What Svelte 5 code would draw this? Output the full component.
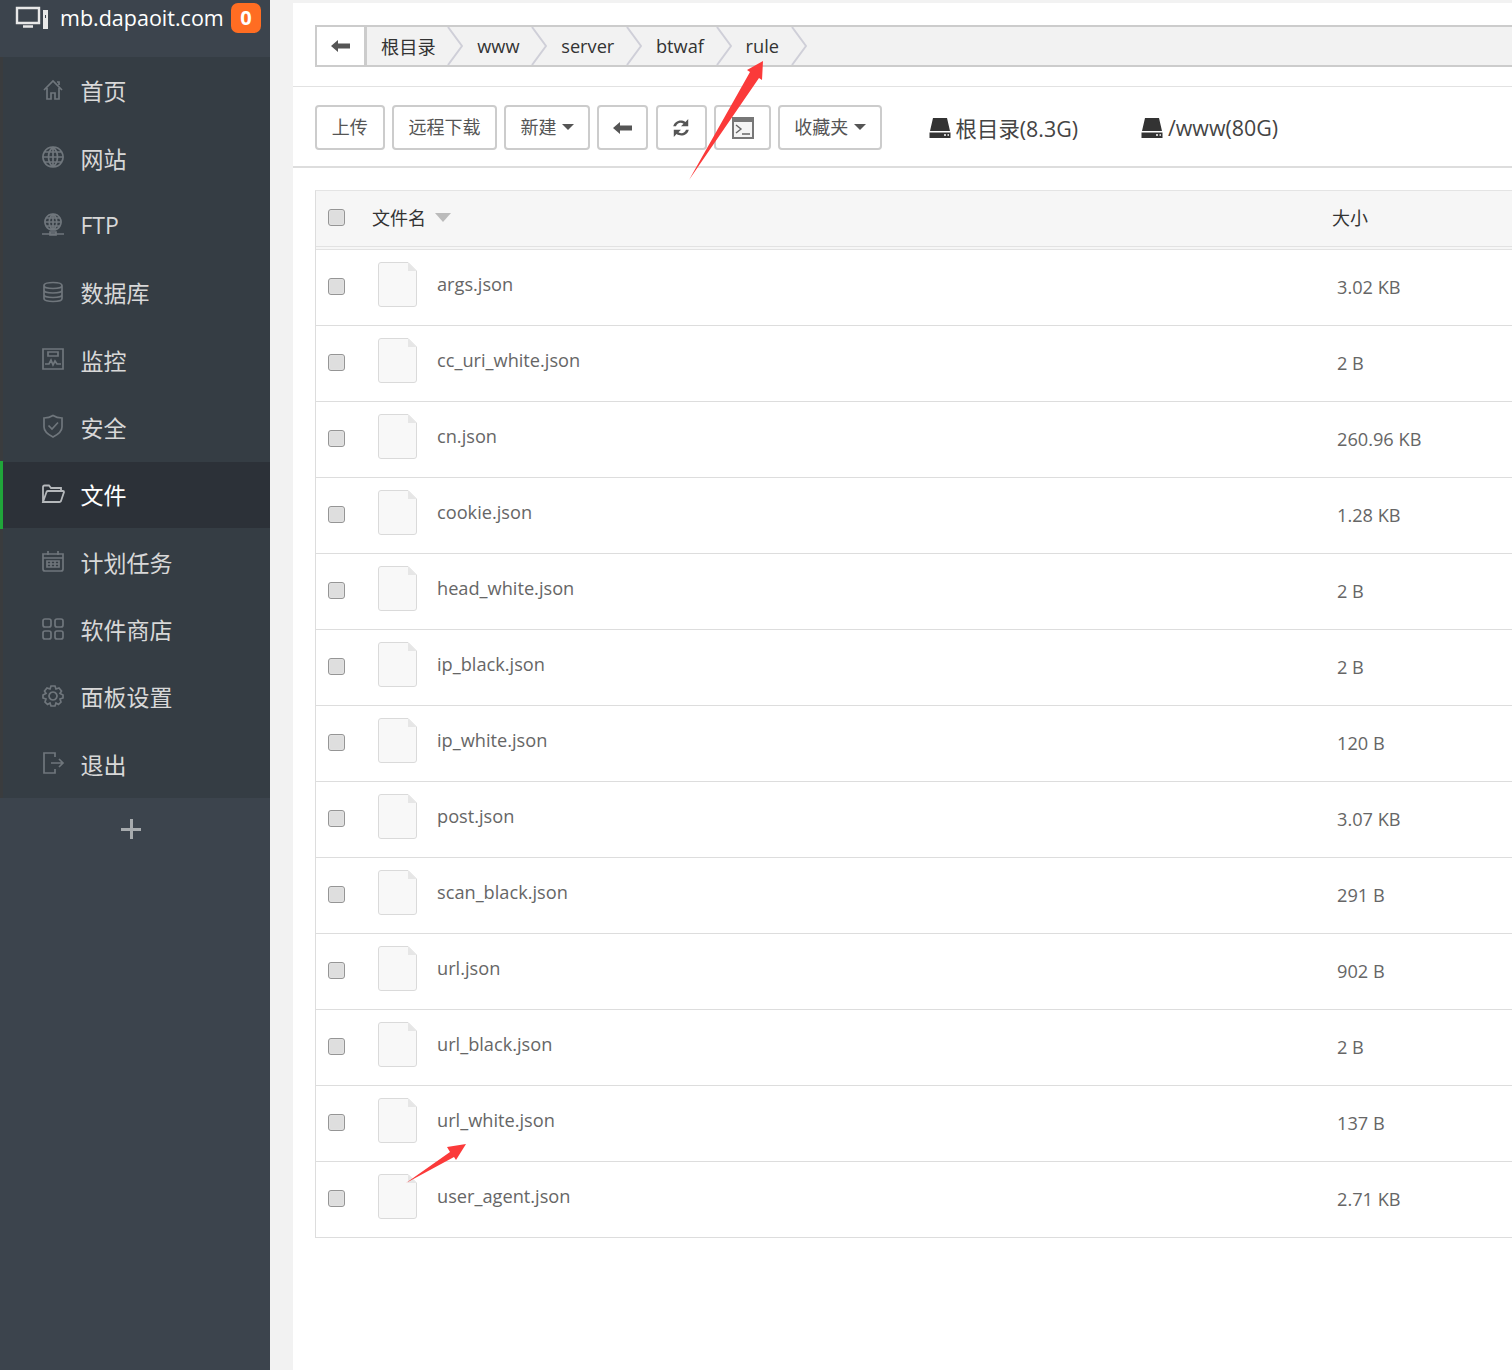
<script>
  const menu = [
    { label: '首页', d: 'M3 12 L12 3 L21 12 M6 10 V21 H10 V15 H14 V21 H18 V10 M16 4 H18 V7' },
    { label: '网站', d: 'M12 2 A10 10 0 1 0 12.01 2 Z M2 12 H22 M3.5 7 H20.5 M3.5 17 H20.5 M12 2 V22 M12 2 C6 7 6 17 12 22 M12 2 C18 7 18 17 12 22' },
    { label: 'FTP', d: 'M12 2 A8 8 0 1 0 12.01 2 Z M4 10 H20 M5 6 H19 M5 14 H19 M12 2 V18 M12 2 C7 6 7 14 12 18 M12 2 C17 6 17 14 12 18 M1 22 H23 M9 20 H15 V23 H9 Z' },
    { label: '数据库', d: 'M3 5.5 C3 1.5 21 1.5 21 5.5 V18.5 C21 22.5 3 22.5 3 18.5 Z M3 5.5 C3 9.5 21 9.5 21 5.5 M3 10 C3 14 21 14 21 10 M3 14.5 C3 18.5 21 18.5 21 14.5' },
    { label: '监控', d: 'M2 2 H22 V22 H2 Z M7 5 H17 V9 H7 Z M4 17 H8 L10 13 L12 18 L14 14 L16 17 H20' },
    { label: '安全', d: 'M12 1.5 C15 3.5 18 4 21 4 V13 C21 18 16 21 12 23 C8 21 3 18 3 13 V4 C6 4 9 3.5 12 1.5 Z M7.5 11.5 L11 15 L17 8.5' },
    { label: '文件', d: 'M2 20 V5 Q2 3.5 3.5 3.5 H8 L10 6 H20 V9 M2 20 H18.5 Q19.5 20 20 19 L23 10 Q23 9 22 9 H7 Q6 9 5.5 10 L2 20 Z', active: true },
    { label: '计划任务', d: 'M2 5 H22 V20 Q22 22 20 22 H4 Q2 22 2 20 Z M2 9 H22 M7 2 V6 M17 2 V6 M6 12 H18 V18 H6 Z M6 15 H18 M10 12 V18 M14 12 V18' },
    { label: '软件商店', d: 'M4 2 H8 Q10 2 10 4 V8 Q10 10 8 10 H4 Q2 10 2 8 V4 Q2 2 4 2 Z M16 2 H20 Q22 2 22 4 V8 Q22 10 20 10 H16 Q14 10 14 8 V4 Q14 2 16 2 Z M4 14 H8 Q10 14 10 16 V20 Q10 22 8 22 H4 Q2 22 2 20 V16 Q2 14 4 14 Z M16 14 H20 Q22 14 22 16 V20 Q22 22 20 22 H16 Q14 22 14 20 V16 Q14 14 16 14 Z' },
    { label: '面板设置', d: 'M10 2 H14 L15 5 L18 4 L20.5 7 L19 9.5 L22 11 V14 L19 15 L20 18 L17.5 20.5 L15 19 L14 22 H10 L9 19 L6.5 20.5 L4 18 L5 15 L2 14 V11 L5 9.5 L3.5 7 L6 4 L9 5 Z M12 8 A4 4 0 1 0 12.01 8 Z' },
    { label: '退出', d: 'M14 6 V2 H3 V22 H14 V18 M10 12 H22 M18 8 L22 12 L18 16' }
  ];
  const crumbs = ['根目录', 'www', 'server', 'btwaf', 'rule'];
  const files = [
    ['args.json', '3.02 KB'], ['cc_uri_white.json', '2 B'], ['cn.json', '260.96 KB'],
    ['cookie.json', '1.28 KB'], ['head_white.json', '2 B'], ['ip_black.json', '2 B'],
    ['ip_white.json', '120 B'], ['post.json', '3.07 KB'], ['scan_black.json', '291 B'],
    ['url.json', '902 B'], ['url_black.json', '2 B'], ['url_white.json', '137 B'],
    ['user_agent.json', '2.71 KB']
  ];
  const back = 'M0 6 L7 0 V3.5 H19 V8.5 H7 V12 Z';
</script>

<div class="page">
  <aside class="side">
    <header class="brand">
      <svg class="monitor" viewBox="0 0 34 24" aria-hidden="true">
        <path class="mon" d="M2 2 H24 V17 H2 Z M8 20.5 H18" />
        <path class="tower" d="M28 4 H33 V23 H28 Z M30 9 H31 V12 H30 Z" fill-rule="evenodd" />
      </svg>
      <span class="domain">mb.dapaoit.com</span>
      <span class="badge">0</span>
    </header>
    <nav class="menu">
      {#each menu as m}
        <div class="item" class:active={m.active}>
          <svg class="ico" viewBox="0 0 24 24" aria-hidden="true"><path d={m.d} /></svg>
          <span>{m.label}</span>
        </div>
      {/each}
    </nav>
    <div class="plus"><i></i><b></b></div>
  </aside>

  <main class="main">
    <section class="crumb-wrap">
      <div class="crumb">
        <button class="cback" aria-label="返回">
          <svg width="19" height="12" viewBox="0 0 19 12"><path d={back} /></svg>
        </button>
        <div class="path">
          {#each crumbs as c}
            <span class="seg">{c}
              <svg class="chev" viewBox="0 0 16 40" preserveAspectRatio="none" aria-hidden="true"><path d="M1 0 L15 20 L1 40" /></svg>
            </span>
          {/each}
        </div>
      </div>
    </section>

    <section class="tools">
      <button class="btn w69">上传</button>
      <button class="btn w105">远程下载</button>
      <button class="btn w86">新建<i class="caret"></i></button>
      <button class="btn w51 plain" aria-label="后退"><svg width="19" height="12" viewBox="0 0 19 12"><path d={back} /></svg></button>
      <button class="btn w51 plain" aria-label="刷新">
        <svg width="20" height="20" viewBox="0 0 18 18">
          <path d="M2 7.5 C3 3 8.5 0.5 13 3.5 L15.5 1 V7.5 H9 L11.3 5.2 C8.5 3.5 5.5 4.5 4.5 7.5 Z M16 10.5 C15 15 9.5 17.5 5 14.5 L2.5 17 V10.5 H9 L6.7 12.8 C9.5 14.5 12.5 13.5 13.5 10.5 Z" />
        </svg>
      </button>
      <button class="btn w57 plain" aria-label="终端">
        <svg class="term" width="22" height="22" viewBox="0 0 22 22">
          <rect x="1" y="1" width="20" height="20" fill="#f4f4f4" stroke="#777" stroke-width="2" />
          <rect x="1" y="1" width="20" height="4" fill="#777" />
          <path d="M4 8 L9 12 L4 16 M10 17 H18" fill="none" stroke="#666" stroke-width="1.4" />
        </svg>
      </button>
      <button class="btn w104 wide">收藏夹<i class="caret"></i></button>
      <div class="disk first">
        <svg width="22" height="22" viewBox="0 0 22 22"><path d="M4 1 H18 L21 14 H1 Z M0.5 15.5 H21.5 V21 H0.5 Z" /><path d="M15 18 H17 M18.5 18 H20" stroke="#fff" stroke-width="1.5" /></svg>
        <span>根目录(8.3G)</span>
      </div>
      <div class="disk second">
        <svg width="22" height="22" viewBox="0 0 22 22"><path d="M4 1 H18 L21 14 H1 Z M0.5 15.5 H21.5 V21 H0.5 Z" /><path d="M15 18 H17 M18.5 18 H20" stroke="#fff" stroke-width="1.5" /></svg>
        <span>/www(80G)</span>
      </div>
    </section>

    <section class="table-wrap">
      <div class="table">
        <div class="thead">
          <span class="check"></span>
          <span class="th-name">文件名<i class="sort"></i></span>
          <span class="th-size">大小</span>
        </div>
        {#each files as f}
          <div class="row">
            <span class="check"></span>
            <svg class="file" width="39" height="45" viewBox="0 0 39 45" aria-hidden="true">
              <path d="M3 .5 H30 L38.5 9 V42 Q38.5 44.5 36 44.5 H3 Q.5 44.5 .5 42 V3 Q.5 .5 3 .5 Z" fill="#f8f8f8" stroke="#dadada" />
              <path d="M30 .5 V9 H38.5 Z" fill="#e6e6e6" />
            </svg>
            <span class="name">{f[0]}</span>
            <span class="size">{f[1]}</span>
          </div>
        {/each}
      </div>
    </section>
  </main>

  <svg class="notes" viewBox="0 0 1512 1370" aria-hidden="true">
    <polygon points="689,180 750,72 747,70 763,61 762,80 759,78" />
    <polygon points="406,1183 450,1152 447,1147 466,1144 456,1160 454,1157" />
  </svg>
</div>

<style>
  :global(body) { margin: 0; background: #f2f2f2; }
  .page {
    position: relative;
    display: flex;
    height: 1370px;
    overflow: hidden;
    font-family: "Open Sans", "Noto Sans CJK SC", sans-serif;
    color: #444;
  }
  .side { flex: 0 0 270px; background: #3c444d; display: flex; flex-direction: column; }
  .brand { height: 57px; box-sizing: border-box; display: flex; align-items: flex-start; padding: 3px 9px 0 15px; color: #fff; }
  .monitor { width: 34px; height: 24px; margin-top: 3px; }
  .mon { fill: none; stroke: #e8e8e8; stroke-width: 2.4; }
  .tower { fill: #e8e8e8; }
  .domain { font-size: 21.5px; line-height: 30px; margin-left: 11px; white-space: nowrap; }
  .badge { margin-left: auto; width: 30px; height: 30px; border-radius: 7px; background: #ff6d22; color: #fff; font-weight: 700; font-size: 20px; line-height: 30px; text-align: center; }
  .menu { background: #353d44; height: 741px; display: flex; flex-direction: column; }
  .item {
    flex: 1;
    display: flex;
    align-items: center;
    gap: 15.5px;
    box-sizing: border-box;
    padding: 0 0 1px 38px;
    border-left: 3px solid #3a3c3e;
    color: #d8d8d8;
    font-size: 23px;
  }
  .ico { width: 24px; height: 24px; flex: none; fill: none; stroke: #6f767c; stroke-width: 1.7; margin-top: -1px; }
  .item.active { background: #2c3138; border-left-color: #20a53a; color: #fff; box-shadow: inset 0 1px #353d44, inset 0 -1px #353d44; }
  .item.active .ico { stroke: #b5b8bb; stroke-width: 1.8; }
  .plus { position: relative; height: 20px; width: 20px; margin: 21px 0 0 121px; }
  .plus i, .plus b { position: absolute; background: #a7abae; display: block; }
  .plus i { left: 0; right: 0; top: 8.5px; height: 3px; }
  .plus b { top: 0; bottom: 0; left: 8.5px; width: 3px; }

  .main { flex: 1; min-width: 0; margin-left: 23px; background: #fff; margin-top: 3px; display: flex; flex-direction: column; }
  .crumb-wrap { height: 84px; box-sizing: border-box; padding: 22px 0 0 22px; border-bottom: 1.5px solid #e2e2e2; }
  .crumb { height: 42px; box-sizing: border-box; border: 2px solid #ccc; border-right: 0; display: flex; background: #f2f2f2; }
  .cback { width: 50px; flex: none; background: #fff; border: 0; border-right: 3px solid #ccc; padding: 2px 0 0 0; }
  .cback path, .btn path { fill: #555; }
  .path { display: flex; align-items: center; height: 100%; }
  .seg { position: relative; display: flex; align-items: center; height: 100%; padding: 0 27.7px 0 14px; font-size: 18.2px; color: #333; white-space: nowrap; }
  .chev { position: absolute; right: 0; top: 0; width: 16px; height: 100%; }
  .chev path { fill: none; stroke: #cfcfd8; stroke-width: 2; }

  .tools { height: 81px; box-sizing: border-box; padding: 18px 0 0 22px; border-bottom: 2px solid #ddd; display: flex; align-items: flex-start; gap: 7.4px; }
  .btn {
    height: 45px; box-sizing: border-box; padding: 0 0 4px;
    display: inline-flex; align-items: center; justify-content: center; gap: 5px;
    background: #fff; border: 2px solid #ccc; border-radius: 4px;
    font: inherit; font-size: 18px; color: #555;
  }
  .btn.plain { padding-bottom: 0; }
  .btn.wide { gap: 6px; }
  .w69 { width: 69.6px; } .w105 { width: 104.9px; } .w86 { width: 85.6px; }
  .w51 { width: 51px; } .w57 { width: 57px; } .w104 { width: 103.8px; }
  .caret { width: 0; height: 0; margin-top: 3px; border: 6px solid transparent; border-top-color: #555; border-bottom: 0; }
  .btn .term path { fill: none; }
  .disk { display: flex; align-items: center; gap: 5px; height: 45px; font-size: 21.4px; color: #444; white-space: nowrap; }
  .disk span { margin-bottom: 1px; }
  .disk path:first-child { fill: #333; }
  .disk.first { margin-left: 39px; }
  .disk.second { margin-left: 55.5px; }

  .table-wrap { padding: 22px 0 0 22px; }
  .table { border-left: 1px solid #ddd; border-top: 1px solid #e4e4e4; }
  .thead { height: 55px; box-sizing: content-box; background: #f6f6f6; border-bottom: 4px double #e2e2e2; display: flex; align-items: center; color: #333; font-size: 18px; }
  .check { flex: none; width: 15px; height: 15px; margin: -2px 0 0 12px; background: #dedede; border: 1.5px solid #959595; border-radius: 3px; box-shadow: inset 0 0 1px #fff; }
  .th-name { margin: -3px 0 0 27px; display: flex; align-items: center; gap: 9px; }
  .sort { width: 0; height: 0; border: 8.5px solid transparent; border-top: 9px solid #bbb; border-bottom: 0; }
  .th-size { margin: -3px 0 0 881px; }
  .row { height: 76px; box-sizing: border-box; display: flex; align-items: center; border-bottom: 1px solid #ddd; font-size: 18.2px; color: #666; }
  .file { flex: none; margin: -6px 0 0 33px; }
  .name { width: 900px; margin-left: 20px; margin-top: -7px; }
  .size { margin-top: -1px; }
  .notes { position: absolute; inset: 0; width: 1512px; height: 1370px; pointer-events: none; }
  .notes polygon { fill: #fb3a3a; }
</style>
